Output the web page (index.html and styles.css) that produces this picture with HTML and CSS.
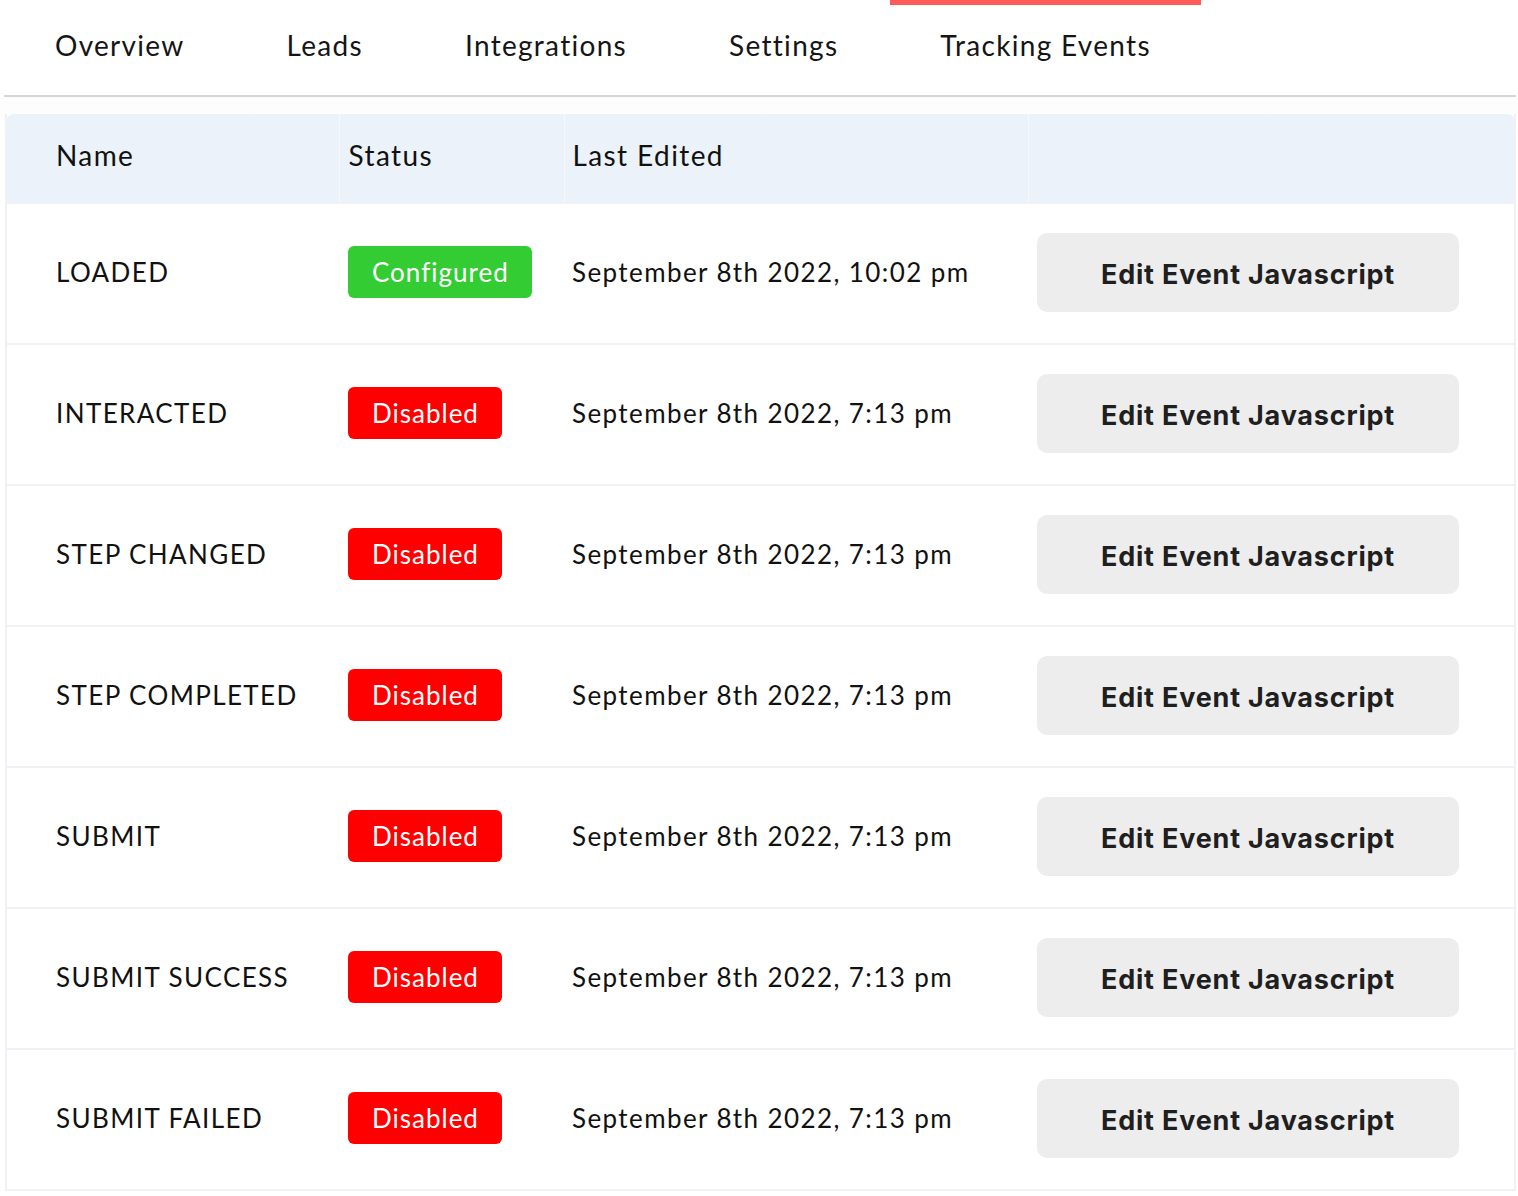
FILE: index.html
```html
<!DOCTYPE html>
<html lang="en">
<head>
<meta charset="utf-8">
<title>Tracking Events</title>
<link rel="stylesheet" href="styles.css">
</head>
<body>
<div class="page">
  <nav class="tabs">
    <a class="tab">Overview</a>
    <a class="tab">Leads</a>
    <a class="tab">Integrations</a>
    <a class="tab">Settings</a>
    <a class="tab active">Tracking Events</a>
  </nav>
  <div class="content">
    <table class="events">
      <thead>
        <tr>
          <th class="c-name">Name</th>
          <th class="c-status">Status</th>
          <th class="c-date">Last Edited</th>
          <th class="c-action"></th>
        </tr>
      </thead>
      <tbody>
        <tr>
          <td class="c-name">LOADED</td>
          <td class="c-status"><span class="badge ok">Configured</span></td>
          <td class="c-date">September 8th 2022, 10:02 pm</td>
          <td class="c-action"><button class="btn">Edit Event Javascript</button></td>
        </tr>
        <tr>
          <td class="c-name">INTERACTED</td>
          <td class="c-status"><span class="badge off">Disabled</span></td>
          <td class="c-date">September 8th 2022, 7:13 pm</td>
          <td class="c-action"><button class="btn">Edit Event Javascript</button></td>
        </tr>
        <tr>
          <td class="c-name">STEP CHANGED</td>
          <td class="c-status"><span class="badge off">Disabled</span></td>
          <td class="c-date">September 8th 2022, 7:13 pm</td>
          <td class="c-action"><button class="btn">Edit Event Javascript</button></td>
        </tr>
        <tr>
          <td class="c-name">STEP COMPLETED</td>
          <td class="c-status"><span class="badge off">Disabled</span></td>
          <td class="c-date">September 8th 2022, 7:13 pm</td>
          <td class="c-action"><button class="btn">Edit Event Javascript</button></td>
        </tr>
        <tr>
          <td class="c-name">SUBMIT</td>
          <td class="c-status"><span class="badge off">Disabled</span></td>
          <td class="c-date">September 8th 2022, 7:13 pm</td>
          <td class="c-action"><button class="btn">Edit Event Javascript</button></td>
        </tr>
        <tr>
          <td class="c-name">SUBMIT SUCCESS</td>
          <td class="c-status"><span class="badge off">Disabled</span></td>
          <td class="c-date">September 8th 2022, 7:13 pm</td>
          <td class="c-action"><button class="btn">Edit Event Javascript</button></td>
        </tr>
        <tr>
          <td class="c-name">SUBMIT FAILED</td>
          <td class="c-status"><span class="badge off">Disabled</span></td>
          <td class="c-date">September 8th 2022, 7:13 pm</td>
          <td class="c-action"><button class="btn">Edit Event Javascript</button></td>
        </tr>
      </tbody>
    </table>
  </div>
</div>
</body>
</html>
```

FILE: styles.css
```css
html, body {
  margin: 0;
  padding: 0;
  background: #ffffff;
}

body {
  font-family: "Lato", "Noto Sans", sans-serif;
  color: #111111;
}

.page {
  width: 1518px;
}

.tabs {
  display: flex;
  margin-left: 4px;
  width: 1512px;
  height: 95px;
  border-bottom: 2px solid #d6d6d6;
}

.tab {
  display: flex;
  align-items: center;
  padding: 0 50px 11px;
  margin-left: 0;
  margin-right: 2px;
  font-size: 28px;
  letter-spacing: 1.3px;
  color: #151515;
  border-top: 5px solid transparent;
  box-sizing: border-box;
  height: 95px;
}

.tab:first-child {
  margin-left: 1px;
}

.tab.active {
  border-top-color: #ff5a5a;
}

.content {
  padding: 17px 2px 0 5px;
  background: linear-gradient(#fcfcfd, #ffffff 40px);
}

.events {
  width: 1511px;
  border-collapse: collapse;
  table-layout: fixed;
  font-size: 26px;
  letter-spacing: 1.4px;
  border: 2px solid #f0f1f4;
  border-top: none;
}

.events thead tr {
  background: #ebf2f9;
}

.events th {
  height: 89px;
  font-weight: 400;
  text-align: left;
  padding: 0 9px 7px;
  font-size: 28px;
  letter-spacing: 1.4px;
  color: #111111;
  border-right: 1px solid #f6f9fc;
  box-sizing: border-box;
}

.events th:first-child {
  border-top-left-radius: 8px;
}

.events th:last-child {
  border-top-right-radius: 8px;
  border-right: none;
}

.events td {
  height: 141px;
  padding: 0 9px 3px;
  border-top: 2px solid #f0f1f4;
  vertical-align: middle;
  box-sizing: border-box;
}

.events .c-name {
  width: 333px;
  padding-left: 49px;
  box-sizing: border-box;
}

.events .c-status {
  width: 225px;
  box-sizing: border-box;
}

.events .c-date {
  width: 464px;
  padding-left: 8px;
  box-sizing: border-box;
  white-space: nowrap;
}

.events .c-action {
  padding-left: 9px;
  box-sizing: border-box;
}

.badge {
  display: inline-flex;
  align-items: center;
  height: 52px;
  padding: 0 23px 0 24px;
  border-radius: 6px;
  color: #ffffff;
  font-size: 26px;
  letter-spacing: 1px;
  box-sizing: border-box;
}

.badge.ok {
  background: #33cc33;
}

.badge.off {
  background: #ff0000;
}

.btn {
  width: 422px;
  height: 79px;
  border: none;
  border-radius: 10px;
  background: #ededed;
  color: #1f1f1f;
  font-family: "Inter", "Noto Sans", sans-serif;
  font-weight: 700;
  font-size: 27px;
  letter-spacing: 0.8px;
  padding: 4px 0 0;
  cursor: pointer;
}
```
